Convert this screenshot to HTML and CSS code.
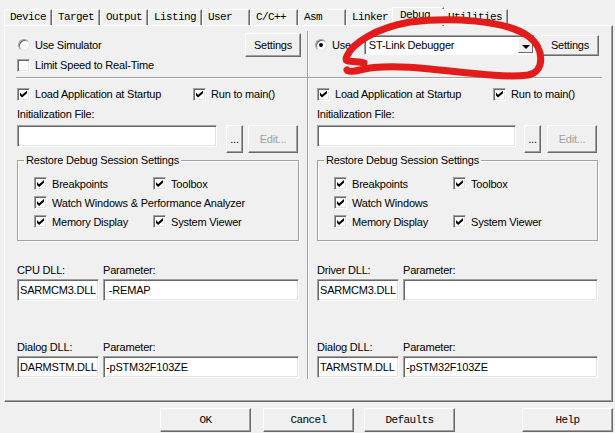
FILE: index.html
```html
<!DOCTYPE html>
<html lang="en">
  <head>
    <meta charset="UTF-8" />
    <title>Options for Target - Debug</title>
    <link rel="stylesheet" href="styles.css">
  </head>
  <body>
    <div class="dialog">
      <!-- TABS -->
      <div class="tabs">
        <span class="tab">Device</span>
        <span class="tab">Target</span>
        <span class="tab">Output</span>
        <span class="tab">Listing</span>
        <span class="tab">User</span>
        <span class="tab">C/C++</span>
        <span class="tab">Asm</span>
        <span class="tab">Linker</span>
        <span class="tab active">Debug</span>
        <span class="tab">Utilities</span>
      </div>

      <div class="page">
        <!-- SIMULATOR -->
        <div class="col left">
          <div class="top">
            <div class="head">
              <label class="opt radio-opt"><span class="radio"></span>Use Simulator</label>
              <button class="btn settings">Settings</button>
            </div>
            <label class="opt"><span class="check"></span>Limit Speed to Real-Time</label>
          </div>
          <div class="sep"></div>

          <div class="pair">
            <label class="opt"><span class="check on"></span>Load Application at Startup</label>
            <label class="opt"><span class="check on"></span>Run to main()</label>
          </div>
          <div class="lbl">Initialization File:</div>
          <div class="file-row">
            <div class="field"></div>
            <button class="btn dots">...</button>
            <button class="btn edit" disabled>Edit...</button>
          </div>

          <fieldset class="group">
            <legend>Restore Debug Session Settings</legend>
            <div class="checks">
              <label class="opt"><span class="check on"></span>Breakpoints</label>
              <label class="opt"><span class="check on"></span>Toolbox</label>
              <label class="opt wide"><span class="check on"></span>Watch Windows &amp; Performance Analyzer</label>
              <label class="opt"><span class="check on"></span>Memory Display</label>
              <label class="opt"><span class="check on"></span>System Viewer</label>
            </div>
          </fieldset>

          <div class="dll first">
            <span class="lbl">CPU DLL:</span>
            <span class="lbl">Parameter:</span>
            <div class="field">SARMCM3.DLL</div>
            <div class="field">&nbsp;-REMAP</div>
          </div>
          <div class="dll">
            <span class="lbl">Dialog DLL:</span>
            <span class="lbl">Parameter:</span>
            <div class="field">DARMSTM.DLL</div>
            <div class="field">-pSTM32F103ZE</div>
          </div>
        </div>

        <!-- TARGET DRIVER -->
        <div class="col right">
          <div class="top">
            <div class="head">
              <label class="opt radio-opt"><span class="radio on"></span>Use:</label>
              <div class="combo">
                <span class="combo-text">ST-Link Debugger</span>
                <span class="combo-btn"></span>
              </div>
              <button class="btn settings">Settings</button>
            </div>
          </div>
          <div class="sep"></div>

          <div class="pair">
            <label class="opt"><span class="check on"></span>Load Application at Startup</label>
            <label class="opt"><span class="check on"></span>Run to main()</label>
          </div>
          <div class="lbl">Initialization File:</div>
          <div class="file-row">
            <div class="field"></div>
            <button class="btn dots">...</button>
            <button class="btn edit" disabled>Edit...</button>
          </div>

          <fieldset class="group">
            <legend>Restore Debug Session Settings</legend>
            <div class="checks">
              <label class="opt"><span class="check on"></span>Breakpoints</label>
              <label class="opt"><span class="check on"></span>Toolbox</label>
              <label class="opt wide"><span class="check on"></span>Watch Windows</label>
              <label class="opt"><span class="check on"></span>Memory Display</label>
              <label class="opt"><span class="check on"></span>System Viewer</label>
            </div>
          </fieldset>

          <div class="dll first">
            <span class="lbl">Driver DLL:</span>
            <span class="lbl">Parameter:</span>
            <div class="field">SARMCM3.DLL</div>
            <div class="field"></div>
          </div>
          <div class="dll">
            <span class="lbl">Dialog DLL:</span>
            <span class="lbl">Parameter:</span>
            <div class="field">TARMSTM.DLL</div>
            <div class="field">-pSTM32F103ZE</div>
          </div>
        </div>
      </div>

      <!-- BUTTONS -->
      <div class="actions">
        <button class="btn act">OK</button>
        <button class="btn act">Cancel</button>
        <button class="btn act">Defaults</button>
        <button class="btn act help">Help</button>
      </div>

      <!-- hand drawn mark -->
      <svg class="scribble" width="615" height="433" viewBox="0 0 615 433">
        <path d="M 364 63 C 352 60, 343 64, 347 56 C 352 44, 375 28, 410 22 C 450 17, 505 20, 528 36 C 545 48, 545 72, 528 75 C 505 78, 470 73, 430 69 C 400 66, 375 66, 360 70 C 352 72, 348 72, 347 70" />
      </svg>
    </div>
  </body>
</html>
```

FILE: styles.css
```css
* {
  box-sizing: border-box;
}

body {
  margin: 0;
  background: #f0f0f0;
  font-family: "Liberation Sans", Arial, sans-serif;
  font-size: 11px;
  letter-spacing: -0.2px;
  color: #000;
}

.dialog {
  position: relative;
  width: 615px;
  height: 433px;
  overflow: hidden;
}

/* tabs */
.tabs {
  position: relative;
  z-index: 1;
  display: flex;
  align-items: flex-end;
  height: 25px;
  padding-left: 4px;
}

.tab {
  font-family: "Liberation Mono", monospace;
  font-size: 11px;
  letter-spacing: -0.6px;
  line-height: 12px;
  height: 16px;
  min-width: 48px;
  padding: 1px 5px 0;
  border-top: 1px solid #fff;
  border-left: 1px solid #fff;
  border-right: 1px solid #696969;
  box-shadow: inset -1px 0 #a0a0a0;
  background: #f0f0f0;
}

.tab.active {
  height: 19px;
  min-width: 52px;
  margin: 0 -2px -1px;
  padding: 1px 7px 0;
}

/* page */
.page {
  display: flex;
  height: 377px;
  margin: 0 2px 0 4px;
  padding-top: 5px;
  border: 1px solid;
  border-color: #fff #696969 #696969 #fff;
  box-shadow: inset -1px -1px #a0a0a0;
}

.col {
  width: 303px;
  height: 348px;
  padding-top: 2px;
}

.col.left {
  padding-left: 12px;
  padding-right: 8px;
  border-right: 1px solid #a0a0a0;
  box-shadow: 1px 0 #fff;
}

.col.right {
  padding-left: 9px;
  padding-right: 13px;
}

.top {
  height: 40px;
}

.head {
  display: flex;
  align-items: center;
  height: 24px;
}

.left .head {
  justify-content: space-between;
}

.sep {
  height: 2px;
  margin-top: 4px;
  border-top: 1px solid #a0a0a0;
  border-bottom: 1px solid #fff;
}

.left .sep {
  margin-left: -1px;
  margin-right: -8px;
}

.right .sep {
  margin-left: -9px;
  margin-right: -4px;
}

/* options */
.opt {
  display: flex;
  align-items: center;
  gap: 5px;
  height: 16px;
  white-space: nowrap;
}

.radio-opt {
  margin-left: 1px;
}

.right .radio-opt {
  margin-left: -2px;
}

.radio {
  position: relative;
  width: 12px;
  height: 12px;
  border-radius: 50%;
  background: #fff;
  border: 1px solid;
  border-color: #a0a0a0 #e3e3e3 #e3e3e3 #a0a0a0;
  box-shadow: inset 1px 1px #696969;
}

.radio.on::after {
  content: "";
  position: absolute;
  left: 3px;
  top: 3px;
  width: 4px;
  height: 4px;
  border-radius: 50%;
  background: #000;
}

.check {
  position: relative;
  flex: none;
  width: 13px;
  height: 13px;
  background: #fff;
  border: 1px solid;
  border-color: #a0a0a0 #fff #fff #a0a0a0;
  box-shadow: inset 1px 1px #696969, inset -1px -1px #e3e3e3;
}

.check.on::after {
  content: "";
  position: absolute;
  left: 2px;
  top: 2px;
  width: 7px;
  height: 7px;
  background: #000;
  clip-path: polygon(0 30%, 30% 60%, 100% 0, 100% 40%, 30% 100%, 0 70%);
}

.pair {
  display: grid;
  grid-template-columns: 176px auto;
  margin-top: 7px;
}

.lbl {
  display: block;
  height: 13px;
  line-height: 13px;
  white-space: nowrap;
}

.pair + .lbl {
  margin-top: 6px;
}

/* fields and buttons */
.field {
  height: 22px;
  line-height: 20px;
  padding-left: 2px;
  background: #fff;
  border: 1px solid;
  border-color: #a0a0a0 #fff #fff #a0a0a0;
  box-shadow: inset 1px 1px #696969, inset -1px -1px #e3e3e3;
  white-space: nowrap;
  overflow: hidden;
}

.btn {
  font: inherit;
  letter-spacing: inherit;
  color: #000;
  background: #f0f0f0;
  padding: 0;
  border: 1px solid;
  border-color: #fff #696969 #696969 #fff;
  box-shadow: inset -1px -1px #a0a0a0;
}

.btn.settings {
  width: 56px;
  height: 24px;
}

.left .settings {
  margin-right: -2px;
}

.right .settings {
  width: 58px;
  height: 21px;
  margin-left: auto;
  margin-right: -1px;
}

.file-row {
  display: grid;
  grid-template-columns: 200px 17px 50px;
  column-gap: 0;
  margin-top: 4px;
  height: 22px;
}

.file-row .dots {
  margin-left: 9px;
  width: 17px;
  line-height: 26px;
}

.file-row .edit {
  margin-left: 14px;
  width: 50px;
  color: #a0a0a0;
}

.right .file-row {
  grid-template-columns: 199px 18px 51px;
}

.right .file-row .dots {
  margin-left: 8px;
}

.right .file-row .edit {
  margin-left: 13px;
}

/* combo */
.combo {
  display: flex;
  width: 171px;
  height: 20px;
  margin-left: 10px;
  background: #fff;
  border: 1px solid;
  border-color: #a0a0a0 #fff #fff #a0a0a0;
  box-shadow: inset 1px 1px #696969;
}

.combo-text {
  flex: 1;
  padding-left: 4px;
  padding-top: 1px;
  line-height: 17px;
}

.combo-btn {
  position: relative;
  width: 15px;
  margin: 1px 1px 1px 0;
  background: #f0f0f0;
  border: 1px solid;
  border-color: #fff #696969 #696969 #fff;
}

.combo-btn::after {
  content: "";
  position: absolute;
  left: 3px;
  top: 7px;
  border-left: 4px solid transparent;
  border-right: 4px solid transparent;
  border-top: 4px solid #000;
}

/* group box */
.group {
  margin: 7px 0 0;
  padding: 7px 0 9px 16px;
  border: 1px solid #a0a0a0;
  box-shadow: inset 1px 1px #fff, 1px 1px #fff;
}

.group legend {
  margin-left: -10px;
  padding: 0 2px;
  line-height: 13px;
}

.checks {
  display: grid;
  grid-template-columns: 119px auto;
  grid-auto-rows: 19px;
  align-items: center;
}

.checks .wide {
  grid-column: 1 / 3;
}

/* dll rows */
.dll {
  display: grid;
  grid-template-columns: 82px 1fr;
  column-gap: 4px;
  row-gap: 2px;
  margin-top: 40px;
}

.dll.first {
  margin-top: 23px;
}

/* bottom buttons */
.actions {
  display: flex;
  gap: 12px;
  margin-top: 6px;
  padding-left: 160px;
  padding-right: 2px;
}

.btn.act {
  width: 91px;
  height: 24px;
  font-family: "Liberation Mono", monospace;
  letter-spacing: -0.6px;
}

.actions .act:nth-child(3) {
  margin-left: -2px;
}

.actions .help {
  margin-left: auto;
}

/* red mark */
.scribble {
  position: absolute;
  left: 0;
  top: 0;
  z-index: 2;
  pointer-events: none;
}

.scribble path {
  fill: none;
  stroke: #e31b1b;
  stroke-width: 7;
  stroke-linecap: round;
  stroke-linejoin: round;
}
```
